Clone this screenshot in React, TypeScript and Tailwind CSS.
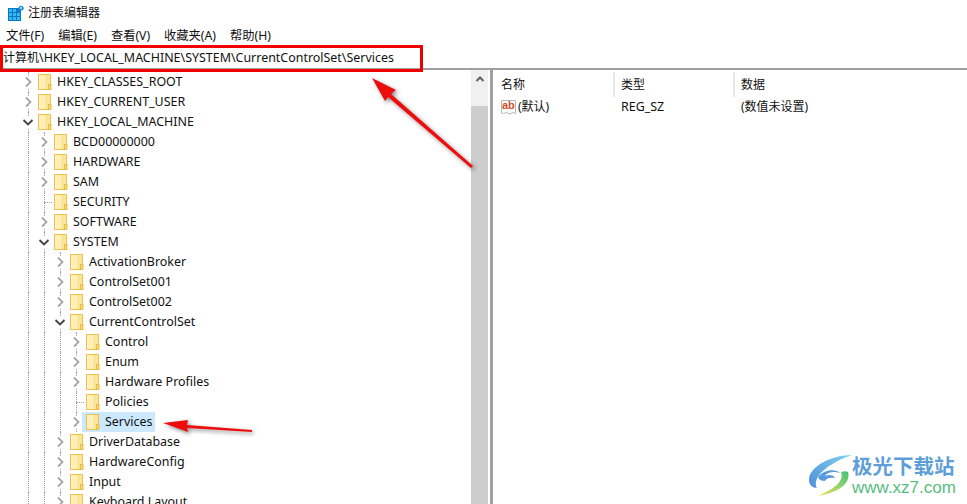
const MENU = ['文件(F)', '编辑(E)', '查看(V)', '收藏夹(A)', '帮助(H)']

type Row = { name: string; level: number; state: 'open' | 'closed' | 'leaf'; selected?: boolean }

const ROWS: Row[] = [
  { name: 'HKEY_CLASSES_ROOT', level: 1, state: 'closed' },
  { name: 'HKEY_CURRENT_USER', level: 1, state: 'closed' },
  { name: 'HKEY_LOCAL_MACHINE', level: 1, state: 'open' },
  { name: 'BCD00000000', level: 2, state: 'closed' },
  { name: 'HARDWARE', level: 2, state: 'closed' },
  { name: 'SAM', level: 2, state: 'closed' },
  { name: 'SECURITY', level: 2, state: 'leaf' },
  { name: 'SOFTWARE', level: 2, state: 'closed' },
  { name: 'SYSTEM', level: 2, state: 'open' },
  { name: 'ActivationBroker', level: 3, state: 'closed' },
  { name: 'ControlSet001', level: 3, state: 'closed' },
  { name: 'ControlSet002', level: 3, state: 'closed' },
  { name: 'CurrentControlSet', level: 3, state: 'open' },
  { name: 'Control', level: 4, state: 'closed' },
  { name: 'Enum', level: 4, state: 'closed' },
  { name: 'Hardware Profiles', level: 4, state: 'closed' },
  { name: 'Policies', level: 4, state: 'leaf' },
  { name: 'Services', level: 4, state: 'closed', selected: true },
  { name: 'DriverDatabase', level: 3, state: 'closed' },
  { name: 'HardwareConfig', level: 3, state: 'closed' },
  { name: 'Input', level: 3, state: 'closed' },
  { name: 'Keyboard Layout', level: 3, state: 'closed' },
]

function RegeditIcon() {
  return (
    <svg width="16" height="16" viewBox="0 0 16 16">
      <rect x="0" y="3" width="13" height="13" fill="#0a78c2" />
      <path d="M1 7h3V4H1zM5 7h3V4H5zM1 11h3V8H1zM5 11h3V8H5zM9 11h3V8H9zM1 15h3v-3H1zM5 15h3v-3H5zM9 15h3v-3H9z" fill="#35b6ee" />
      <path d="M12.5 0.5l1.2 0.8 1.3-0.3 0.3 1.3 0.7 0.9-0.7 1.1-0.3 1.2-1.3-0.3-1.2 0.8-0.9-1-1.3-0.5 0.3-1.3-0.3-1.2 1.3-0.4z" fill="#1c8fd6" />
      <circle cx="13" cy="3" r="1" fill="#bfe6fa" />
    </svg>
  )
}

function Folder() {
  return (
    <svg width="14" height="16" viewBox="0 0 14 16" className="shrink-0">
      <rect x="0.5" y="0.5" width="12" height="15" fill="#fde596" stroke="#ecc24f" />
      <rect x="1" y="1" width="6" height="14" fill="#fff0bd" />
      <path d="M10.5 15.5v-5h2.5v5z" fill="#fcdc82" stroke="#e6b93f" />
    </svg>
  )
}

function Chevron({ open }: { open: boolean }) {
  return (
    <svg width="12" height="12" viewBox="0 0 12 12" className="bg-white">
      {open ? (
        <path d="M1.5 4l4.5 4.5L10.5 4" fill="none" stroke="#404040" strokeWidth="1.8" />
      ) : (
        <path d="M4 1.5L8.5 6 4 10.5" fill="none" stroke="#a6a6a6" strokeWidth="1.8" />
      )}
    </svg>
  )
}

function TreeRow({ row }: { row: Row }) {
  return (
    <div className="flex h-5 items-center pl-5">
      {Array.from({ length: row.level }).map((_, i) => {
        const last = i === row.level - 1
        return (
          <div key={i} className="relative flex h-5 w-4 shrink-0 items-center justify-center">
            <div className="absolute left-2 top-0 h-5 border-l border-dotted border-[#a0a0a0]" />
            {last && row.state !== 'leaf' && (
              <div className="relative">
                <Chevron open={row.state === 'open'} />
              </div>
            )}
            {last && row.state === 'leaf' && (
              <div className="absolute left-2 top-[10px] w-2 border-t border-dotted border-[#a0a0a0]" />
            )}
          </div>
        )
      })}
      <div className={`relative -ml-[2px] flex h-5 items-center gap-[5px] pl-1 pr-[3px] ${row.selected ? 'bg-[#cce8ff]' : ''}`}>
        <Folder />
        <span className="whitespace-nowrap text-[12.45px]">{row.name}</span>
      </div>
    </div>
  )
}

function StringValueIcon() {
  return (
    <svg width="16" height="16" viewBox="0 0 16 16" className="shrink-0">
      <path d="M0.5 1.5h14v13l-3-1-3 1.5-3-1.5-3 1-2 -0.5z" fill="#fff" stroke="#b5b5b5" />
      <text x="1" y="10" fontSize="11" fontWeight="700" fill="#d2492a" fontFamily="Liberation Sans, sans-serif">ab</text>
    </svg>
  )
}

function Arrows() {
  return (
    <svg width="967" height="504" viewBox="0 0 967 504" className="absolute left-0 top-0 drop-shadow-[2px_2px_2px_rgba(0,0,0,0.45)]">
      <polygon points="372,78 396,90 391,94 473,166 471,168 388,97 385,101" fill="#ee0d0d" />
      <polygon points="163,423 188,420 187,425 252,430 252,432 187,428 188,432" fill="#ee0d0d" />
    </svg>
  )
}

function Watermark() {
  return (
    <div className="absolute left-[806px] top-[451px] flex h-[48px] w-[155px] items-center">
      <svg width="48" height="46" viewBox="0 0 48 46" className="shrink-0">
        <defs>
          <linearGradient id="swirlBlue" x1="0" y1="1" x2="1" y2="0">
            <stop offset="0" stopColor="#4f8fd8" />
            <stop offset="1" stopColor="#7fd0f2" />
          </linearGradient>
          <linearGradient id="swirlGreen" x1="0" y1="1" x2="1" y2="0">
            <stop offset="0" stopColor="#f3e65a" />
            <stop offset="1" stopColor="#45c07a" />
          </linearGradient>
        </defs>
        <path d="M46 3C26 3 4 14 3 27c-0.5 6 4 9 8 9C7 30 12 15 46 3z" fill="url(#swirlBlue)" />
        <path d="M12 25c5-7 17-9 22-4-6-2-13-1-15 3 4-2 9-1 10 2-4-1-9 0-10 3-3 0-6-1-7-4z" fill="#5b9bdc" />
        <path d="M42 20c3 9-6 20-30 24 8-4 19-9 22-15 2-3 2-6 1-9 3-1 5-1 7 0z" fill="url(#swirlGreen)" />
      </svg>
      <div className="-ml-[2px] flex flex-col">
        <span className="whitespace-nowrap text-[20.5px] font-bold leading-[26px] text-[#5f9fd8]">极光下载站</span>
        <span className="whitespace-nowrap font-['Liberation_Sans',sans-serif] text-[17px] leading-[18px] text-[#56bd7f]">www.xz7.com</span>
      </div>
    </div>
  )
}

export default function App() {
  return (
    <div className="relative h-[504px] w-[967px] overflow-hidden bg-white font-['Noto_Sans','Noto_Sans_CJK_SC',sans-serif] text-[12px] text-[#111]">
      <div className="flex h-[26px] items-center gap-1 pl-2">
        <RegeditIcon />
        <span className="-mt-[1px]">注册表编辑器</span>
      </div>

      <div className="flex h-5 items-center gap-[14px] pl-[6px] pt-[1px] text-[12.25px]">
        {MENU.map(item => (
          <span key={item}>{item}</span>
        ))}
      </div>

      <div className="flex h-[24px] items-center border-b-2 border-[#a0a0a0] pl-[3px] pt-[2px]">
        <span>计算机</span>
        <span className="text-[12.45px]">\HKEY_LOCAL_MACHINE\SYSTEM\CurrentControlSet\Services</span>
      </div>

      <div className="flex h-[434px]">
        <div className="h-full w-[471px] shrink-0 overflow-hidden pt-[2px]">
          {ROWS.map(row => (
            <TreeRow key={row.name} row={row} />
          ))}
        </div>

        {/* scrollbar */}
        <div className="flex w-[17px] shrink-0 flex-col bg-[#f0f0f0]">
          <div className="flex h-[36px] items-start justify-center pt-[5px]">
            <svg width="10" height="8" viewBox="0 0 10 8">
              <path d="M1.5 6L5 2.5 8.5 6" fill="none" stroke="#606060" strokeWidth="2" />
            </svg>
          </div>
          <div className="flex-1 bg-[#cdcdcd]" />
        </div>

        <div className="w-[5px] shrink-0 border-r-[3px] border-[#a0a0a0] bg-white" />

        <div className="flex-1 pl-2">
          <div className="flex h-[27px] items-center pt-[2px]">
            <div className="flex h-full w-[114px] items-center border-r-2 border-[#e8e8e8]">名称</div>
            <div className="flex h-full w-[120px] items-center border-r-2 border-[#e8e8e8] pl-[6px]">类型</div>
            <div className="flex h-full items-center pl-[6px]">数据</div>
          </div>
          <div className="flex h-5 items-center">
            <div className="flex w-[120px] items-center gap-[1px]">
              <StringValueIcon />
              <span>(默认)</span>
            </div>
            <div className="w-[120px] text-[12.45px]">REG_SZ</div>
            <div>(数值未设置)</div>
          </div>
        </div>
      </div>

      {/* annotations on top of the screenshot */}
      <div className="absolute left-0 top-[45px] h-[27px] w-[423px] border-[3px] border-[#f00000]" />
      <Arrows />
      <Watermark />
    </div>
  )
}
